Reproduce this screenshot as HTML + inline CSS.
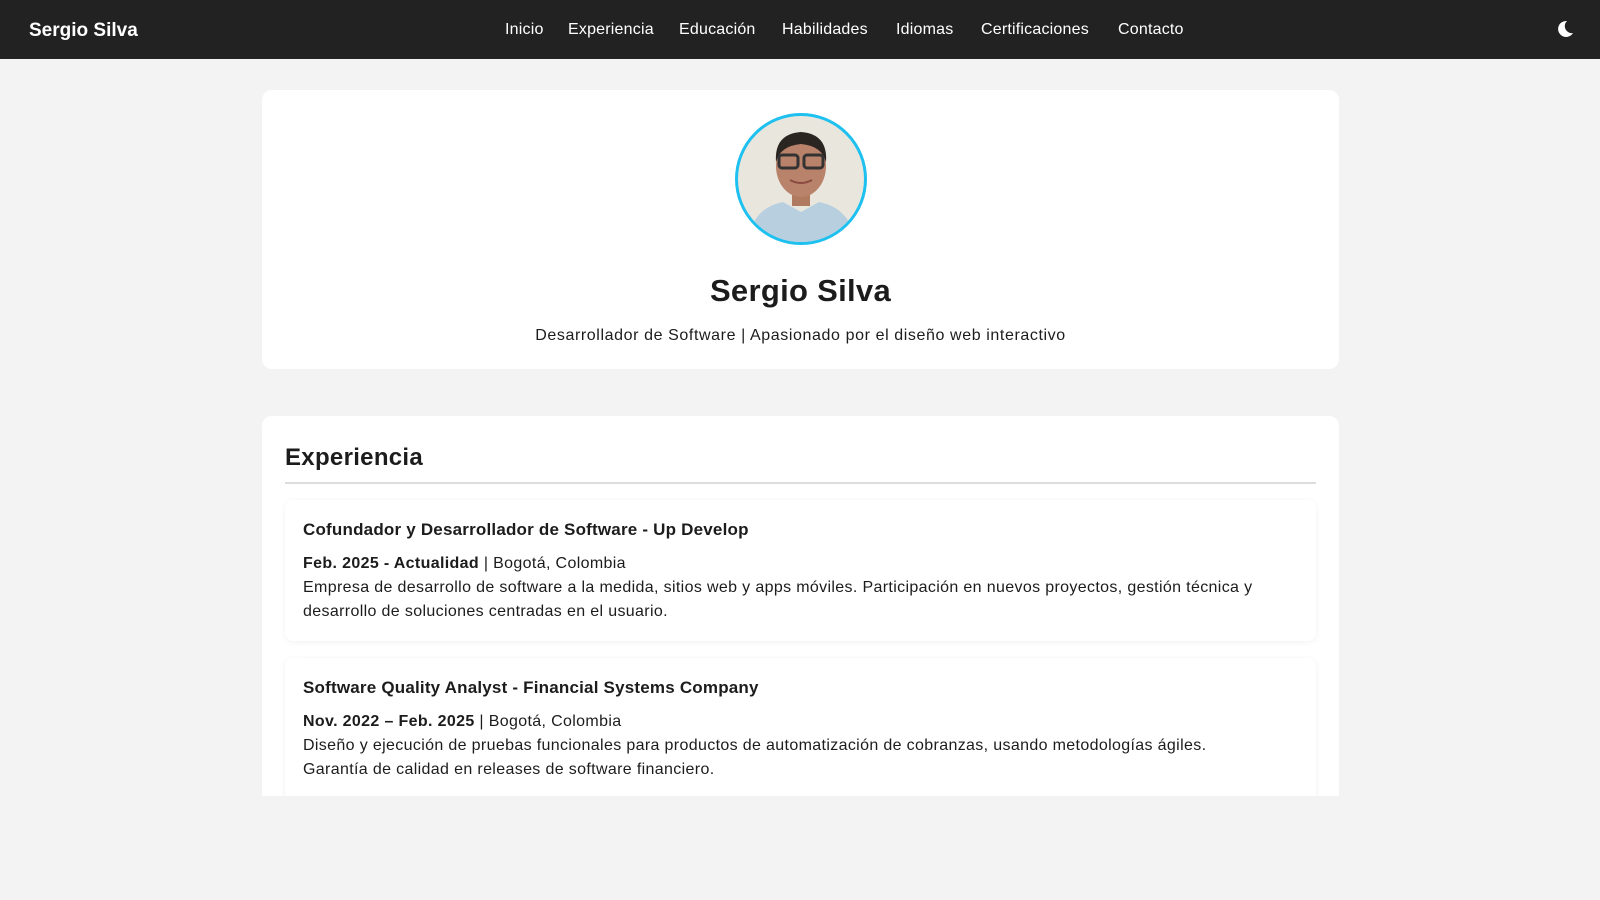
<!DOCTYPE html>
<html><head><meta charset="utf-8"><style>
*{box-sizing:border-box;margin:0;padding:0}
body{width:1600px;height:900px;overflow:hidden;background:#f3f3f3;font-family:"Liberation Sans",sans-serif;color:#1c1c1c}
nav{position:absolute;left:0;top:0;width:1600px;height:59px;background:#222;color:#fff}
.logo{position:absolute;left:29px;top:20px;font-size:19px;font-weight:bold}
.links a{position:absolute;top:21px;font-size:16px;color:#fff;text-decoration:none;letter-spacing:0.2px}
.moon{position:absolute;left:1556px;top:20px}
.card{position:absolute;left:262px;width:1077px;background:#fff;border-radius:10px}
.c1{top:90px;height:279px;text-align:center}
.av{position:absolute;left:473px;top:23px;width:132px;height:132px;border-radius:50%;border:3px solid #1ec0f0;background:#e9e6de;overflow:hidden}
.name{position:absolute;left:0;right:0;top:183px;font-size:31px;font-weight:bold;letter-spacing:0.3px}
.sub{position:absolute;left:0;right:0;top:237px;font-size:16px;letter-spacing:0.6px}
.c2{top:416px;height:380px;border-radius:10px 10px 0 0;overflow:hidden}
h2{position:absolute;left:23px;top:28px;font-size:24px;font-weight:bold;letter-spacing:0.3px}
.hr{position:absolute;left:23px;right:23px;top:66px;height:2px;background:#ddd}
.job{position:absolute;left:23px;right:23px;background:#fff;border-radius:8px;box-shadow:0 1px 6px rgba(0,0,0,.06);padding:18px 18px;font-size:16px;line-height:24px;letter-spacing:0.35px}
.job h3{font-size:17px;font-weight:bold;margin-bottom:10px;line-height:24px;letter-spacing:0.2px}
</style></head><body>
<nav><div class="logo">Sergio Silva</div>
<div class="links"><a style="left:505px">Inicio</a><a style="left:568px">Experiencia</a><a style="left:679px">Educación</a><a style="left:782px">Habilidades</a><a style="left:896px">Idiomas</a><a style="left:981px">Certificaciones</a><a style="left:1118px">Contacto</a></div>
<svg class="moon" width="18" height="18" viewBox="0 0 18 18"><path d="M11 1A8 8 0 1 0 17 13A7 7 0 0 1 11 1Z" fill="#fff"/></svg></nav>
<div class="card c1"><div class="av"><svg width="126" height="126" viewBox="0 0 126 126">
<path d="M10 126 Q14 92 45 86 L63 96 L81 86 Q112 92 118 126Z" fill="#b8cfe0"/>
<rect x="54" y="70" width="18" height="20" fill="#b07a60"/>
<ellipse cx="63" cy="50" rx="25" ry="31" fill="#b9826a"/>
<path d="M38 46 Q36 18 63 16 Q90 18 88 46 Q84 30 63 28 Q42 30 38 46Z" fill="#2b2522"/>
<rect x="41" y="39" width="19" height="13" rx="3" fill="none" stroke="#333" stroke-width="3"/>
<rect x="66" y="39" width="19" height="13" rx="3" fill="none" stroke="#333" stroke-width="3"/>
<path d="M52 64 Q63 70 74 64" stroke="#8a4a40" stroke-width="2" fill="none"/>
</svg></div><div class="name">Sergio Silva</div><div class="sub">Desarrollador de Software | Apasionado por el diseño web interactivo</div></div>
<div class="card c2"><h2>Experiencia</h2><div class="hr"></div>
<div class="job" style="top:84px;height:141px"><h3>Cofundador y Desarrollador de Software - Up Develop</h3><b>Feb. 2025 - Actualidad</b> | Bogotá, Colombia<br>Empresa de desarrollo de software a la medida, sitios web y apps móviles. Participación en nuevos proyectos, gestión técnica y desarrollo de soluciones centradas en el usuario.</div>
<div class="job" style="top:242px;height:160px"><h3>Software Quality Analyst - Financial Systems Company</h3><b>Nov. 2022 – Feb. 2025</b> | Bogotá, Colombia<br>Diseño y ejecución de pruebas funcionales para productos de automatización de cobranzas, usando metodologías ágiles.<br>Garantía de calidad en releases de software financiero.</div>
</div>
</body></html>
